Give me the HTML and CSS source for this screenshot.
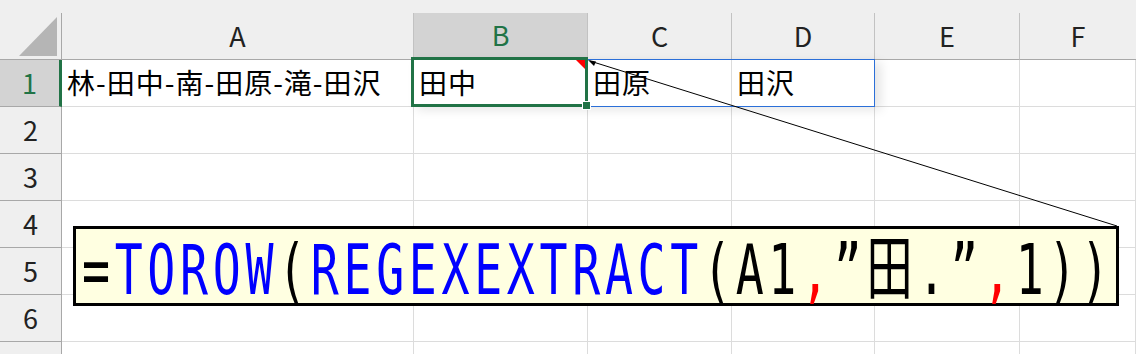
FILE: index.html
```html
<!DOCTYPE html>
<html lang="ja">
  <head>
    <meta charset="UTF-8" />
    <meta name="viewport" content="width=device-width, initial-scale=1.0" />
    <title>TOROW REGEXEXTRACT</title>
    <link rel="stylesheet" href="styles.css">
  </head>
  <body>
    <div class="sheet">
      <div class="topbar"></div>
      <div class="grid">
        <div class="corner">
          <svg width="62" height="46" viewBox="0 0 62 46">
            <polygon points="19,43 57,43 57,4" fill="#b5b5b5" />
          </svg>
        </div>
        <div class="col-head">A</div>
        <div class="col-head active">B</div>
        <div class="col-head">C</div>
        <div class="col-head">D</div>
        <div class="col-head">E</div>
        <div class="col-head last">F</div>

        <div class="row-head active">1</div>
        <div class="cell">林-田中-南-田原-滝-田沢</div>
        <div class="cell">田中</div>
        <div class="cell">田原</div>
        <div class="cell">田沢</div>
        <div class="cell"></div>
        <div class="cell"></div>

        <div class="row-head">2</div>
        <div class="cell"></div><div class="cell"></div><div class="cell"></div>
        <div class="cell"></div><div class="cell"></div><div class="cell"></div>

        <div class="row-head">3</div>
        <div class="cell"></div><div class="cell"></div><div class="cell"></div>
        <div class="cell"></div><div class="cell"></div><div class="cell"></div>

        <div class="row-head">4</div>
        <div class="cell"></div><div class="cell"></div><div class="cell"></div>
        <div class="cell"></div><div class="cell"></div><div class="cell"></div>

        <div class="row-head">5</div>
        <div class="cell"></div><div class="cell"></div><div class="cell"></div>
        <div class="cell"></div><div class="cell"></div><div class="cell"></div>

        <div class="row-head">6</div>
        <div class="cell"></div><div class="cell"></div><div class="cell"></div>
        <div class="cell"></div><div class="cell"></div><div class="cell"></div>

        <div class="row-head">7</div>
        <div class="cell"></div><div class="cell"></div><div class="cell"></div>
        <div class="cell"></div><div class="cell"></div><div class="cell"></div>
      </div>

      <!-- spill range and active cell -->
      <div class="spill"></div>
      <div class="selection">
        <span class="note"></span>
        <span class="handle"></span>
      </div>

      <svg class="callout-line" width="1136" height="354">
        <line x1="590" y1="61" x2="1117" y2="226" stroke="#000" stroke-width="1" />
        <polygon points="588,60 596,61.5 594,66" fill="#000" />
      </svg>

      <div class="formula-box">
        <span class="formula-text"><span>=</span><span class="fn">TOROW</span><span>(</span><span class="fn">REGEXEXTRACT</span><span>(A1</span><span class="sep">,</span><span>”田.”</span><span class="sep">,</span><span>1))</span></span>
      </div>
    </div>
  </body>
</html>
```

FILE: styles.css
```css
body {
  margin: 0;
  background: #ffffff;
  font-family: "Noto Sans CJK JP", "Noto Sans", sans-serif;
  color: #000;
}
.sheet {
  position: relative;
  width: 1136px;
  height: 354px;
  overflow: hidden;
}
.topbar {
  height: 13px;
  background: #efefef;
}
.grid {
  display: grid;
  grid-template-columns: 62px 352px 174px 144px 143px 145px 1fr;
  grid-template-rows: 47px repeat(7, 47px);
}
.corner {
  background: #efefef;
  border-right: 1px solid #a8a8a8;
  border-bottom: 1px solid #a8a8a8;
  box-sizing: border-box;
}
.corner svg {
  display: block;
}
.col-head {
  background: #efefef;
  border-right: 1px solid #c2c2c2;
  border-bottom: 1px solid #a8a8a8;
  box-sizing: border-box;
  display: flex;
  align-items: center;
  justify-content: center;
  font-size: 27px;
  color: #222;
  padding-bottom: 2px;
}
.col-head.last {
  border-right: none;
}
.col-head.active {
  background: #d3d3d3;
  color: #217346;
  border-bottom: 2px solid #217346;
}
.row-head {
  background: #efefef;
  border-right: 1px solid #a8a8a8;
  border-bottom: 1px solid #a8a8a8;
  box-sizing: border-box;
  display: flex;
  align-items: center;
  justify-content: center;
  font-size: 27px;
  color: #222;
  padding-bottom: 2px;
}
.row-head.active {
  background: #d3d3d3;
  color: #217346;
  border-right: 3px solid #217346;
}
.cell {
  border-right: 1px solid #dcdcdc;
  border-bottom: 1px solid #dcdcdc;
  box-sizing: border-box;
  display: flex;
  align-items: center;
  padding-left: 5px;
  padding-bottom: 2px;
  font-size: 28px;
  letter-spacing: 1px;
  white-space: nowrap;
}
.spill {
  position: absolute;
  left: 411px;
  top: 59px;
  width: 464px;
  height: 48px;
  box-sizing: border-box;
  border: 1px solid #2b6fd8;
  box-shadow: 6px 3px 10px rgba(0, 0, 0, 0.1);
}
.selection {
  position: absolute;
  left: 411px;
  top: 57px;
  width: 177px;
  height: 50px;
  box-sizing: border-box;
  border: 3px solid #217346;
}
.note {
  position: absolute;
  right: 0;
  top: 0;
  width: 0;
  height: 0;
  border-left: 9px solid transparent;
  border-top: 9px solid #ff0000;
}
.handle {
  position: absolute;
  right: -6px;
  bottom: -6px;
  width: 7px;
  height: 7px;
  background: #217346;
  border: 1px solid #fff;
}
.callout-line {
  position: absolute;
  left: 0;
  top: 0;
  pointer-events: none;
}
.formula-box {
  position: absolute;
  left: 73px;
  top: 226px;
  width: 1046px;
  height: 80px;
  box-sizing: border-box;
  border: 3px solid #000;
  background: #ffffe1;
  padding: 6px 0 0 6px;
}
.formula-text {
  display: inline-block;
  white-space: nowrap;
  font-family: "DejaVu Sans Mono", "Noto Sans CJK JP", monospace;
  font-size: 70px;
  line-height: 70px;
  letter-spacing: 7px;
  transform: scaleX(0.665);
  transform-origin: left center;
}
.fn {
  color: #0000ff;
}
.sep {
  color: #ff0000;
}
```
